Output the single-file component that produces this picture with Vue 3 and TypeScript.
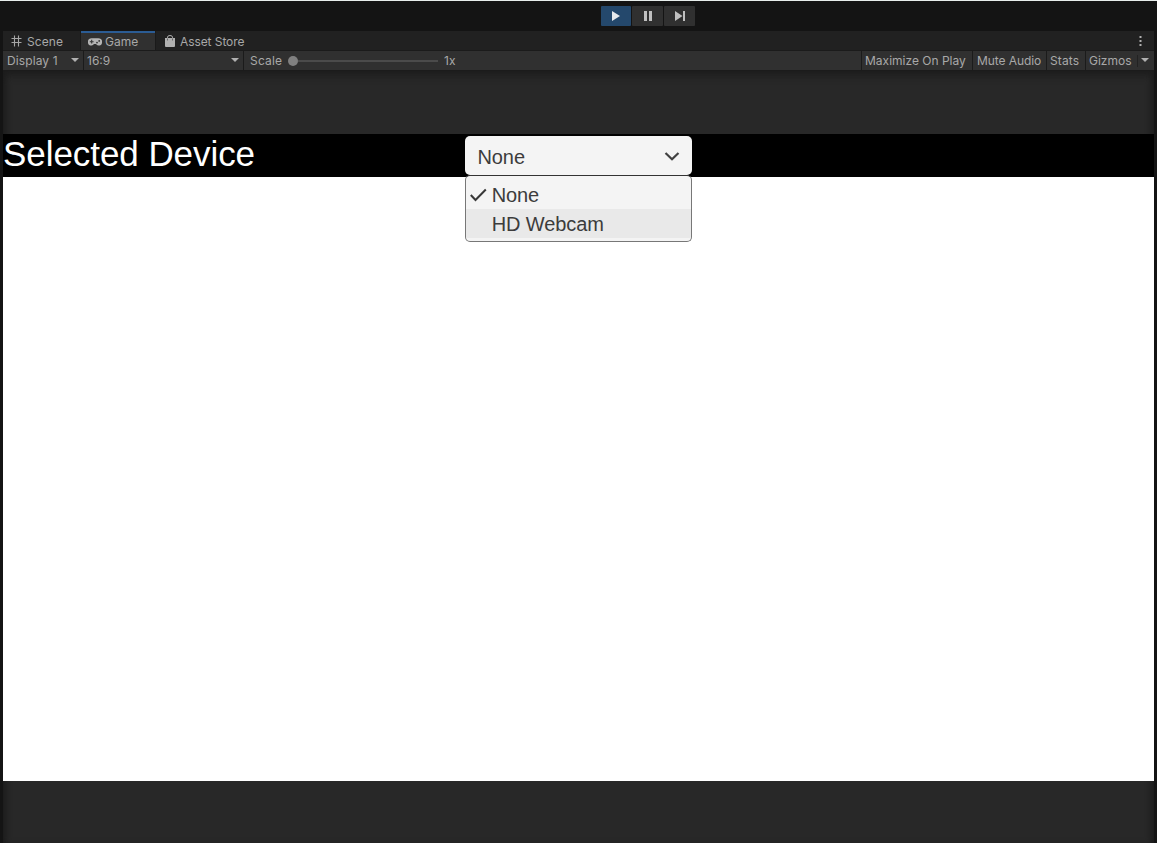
<script setup lang="ts">
import { ref } from 'vue'

const selected = ref('None')
const hovered = ref('HD Webcam')
const devices: string[] = ['None', 'HD Webcam']
</script>

<template>
  <div class="editor">
    <header class="playbar">
      <button class="play active" aria-label="Play">
        <svg width="30" height="20"><path d="M11 5 L19 10 L11 15 Z" fill="#e6e9ec" /></svg>
      </button>
      <button class="play" aria-label="Pause">
        <svg width="31" height="20"><path d="M12 5h3v10h-3zM17 5h3v10h-3z" fill="#c0c0c0" /></svg>
      </button>
      <button class="play" aria-label="Step">
        <svg width="31" height="20"><path d="M11 5 L18.5 10 L11 15 Z M19 5h2v10h-2z" fill="#c0c0c0" /></svg>
      </button>
    </header>

    <section class="panel">
      <nav class="tabs">
        <div class="tab scene">
          <svg width="12" height="12" viewBox="0 0 12 12">
            <path d="M3.5 0.5v11M7.5 0.5v11M0.5 3.5h10M0.5 7.5h10" stroke="#a5a5a5" stroke-width="1.1" />
          </svg>
          <span>Scene</span>
        </div>
        <div class="tab game">
          <svg width="14" height="8" viewBox="0 0 14 8">
            <path d="M3.6 0.2h6.8a3.6 3.6 0 0 1 0 7.4c-1.2 0-1.8-.8-2.3-1.5H5.9c-.5.7-1.1 1.5-2.3 1.5a3.6 3.6 0 0 1 0-7.4z" fill="#b5b5b5" />
            <path d="M1.8 3.7h3.8M3.7 1.8v3.8" stroke="#353535" stroke-width="1.1" />
            <circle cx="9" cy="4.6" r=".9" fill="#353535" /><circle cx="11.2" cy="2.9" r=".9" fill="#353535" />
          </svg>
          <span>Game</span>
        </div>
        <div class="tab store">
          <svg width="10" height="12" viewBox="0 0 10 12">
            <path d="M0 3h10v8q0 1-1 1H1q-1 0-1-1z" fill="#b0b0b0" />
            <path d="M2.5 4V2.2Q2.5.5 5 .5t2.5 1.7V4" fill="none" stroke="#b0b0b0" />
            <path d="M2.5 3.5v2M7.5 3.5v2" stroke="#666" />
          </svg>
          <span>Asset Store</span>
        </div>
        <svg class="more" width="3" height="11"><path d="M.5 0h2v2h-2zM.5 4h2v2h-2zM.5 8h2v2h-2z" fill="#b0b0b0" /></svg>
      </nav>

      <div class="toolbar">
        <div class="cell display"><span>Display 1</span><i class="arrow" /></div>
        <div class="cell ratio"><span>16:9</span><i class="arrow" /></div>
        <div class="scale">
          <span class="scale-label">Scale</span>
          <div class="slider"><i class="knob" /><i class="track" /></div>
          <span>1x</span>
        </div>
        <div class="cell opt maximize"><span>Maximize On Play</span></div>
        <div class="cell opt mute"><span>Mute Audio</span></div>
        <div class="cell opt stats"><span>Stats</span></div>
        <div class="cell opt gizmos"><span>Gizmos</span><i class="split" /><i class="arrow" /></div>
      </div>

      <main class="viewport">
        <div class="canvas">
          <div class="device-row">
            <h1>Selected Device</h1>
            <div class="dropdown">
              <div class="field">
                <span>{{ selected }}</span>
                <svg width="16" height="10" viewBox="0 0 16 10">
                  <path d="M1.5 1 L8 7.3 L14.5 1" fill="none" stroke="#414141" stroke-width="2.2" />
                </svg>
              </div>
              <div class="menu">
                <div v-for="d in devices" :key="d" class="item" :class="{ hover: d === hovered }">
                  <svg v-if="d === selected" width="18" height="14" viewBox="0 0 18 14">
                    <path d="M0.8 7 L5.5 12 L15.8 1.5" fill="none" stroke="#383838" stroke-width="2" />
                  </svg>
                  <span>{{ d }}</span>
                </div>
              </div>
            </div>
          </div>
        </div>
      </main>
    </section>
  </div>
</template>

<style>
body {
  margin: 0;
  background: #141414;
}
</style>

<style scoped>
.editor {
  box-sizing: border-box;
  width: 1157px;
  height: 843px;
  overflow: hidden;
  background: #141414;
  border-top: 1px solid #e8eeec;
  font: 12px/18px Inter, "Liberation Sans", sans-serif;
  color: #a8a8a8;
  display: flex;
  flex-direction: column;
}
.playbar {
  height: 30px;
  box-sizing: border-box;
  padding: 5px 0 0 601px;
  display: flex;
  gap: 1px;
  flex: none;
}
.play {
  display: block;
  height: 20px;
  padding: 0;
  border: 0;
  background: #303030;
  border-radius: 1px;
}
.play.active { background: #24486c; }
.play svg { display: block; }
.panel {
  flex: 1;
  margin: 0 3px;
  display: flex;
  flex-direction: column;
  width: 1151px;
}
.tabs {
  height: 19px;
  background: #212121;
  display: flex;
  flex: none;
}
.tab {
  box-sizing: border-box;
  height: 19px;
  display: flex;
  align-items: center;
  white-space: nowrap;
}
.tab span { line-height: 17px; padding-top: 2px; }
.scene { width: 78px; padding-left: 8px; gap: 4px; border-right: 1px solid #1a1a1a; letter-spacing: 0.1px; }
.scene svg { margin-top: 1px; }
.game { width: 74px; padding-left: 7px; gap: 3px; background: #303030; border-top: 2px solid #2b5c94; }
.game span { padding-top: 0; }
.store { padding-left: 9px; gap: 5px; border-left: 1px solid #1a1a1a; letter-spacing: -0.08px; }
.more { margin: 5px 12px 0 auto; }
.toolbar {
  height: 21px;
  box-sizing: border-box;
  background: #303030;
  border-top: 1px solid #1b1b1b;
  border-bottom: 1px solid #1b1b1b;
  display: flex;
  flex: none;
  white-space: nowrap;
}
.toolbar span { line-height: 19px; }
.cell {
  box-sizing: border-box;
  height: 19px;
  display: flex;
  align-items: center;
  justify-content: space-between;
  border-right: 1px solid #1b1b1b;
  padding: 0 4px;
}
.display { width: 81px; letter-spacing: 0.1px; }
.ratio { width: 160px; padding-left: 3px; }
.arrow {
  width: 0;
  height: 0;
  border: 4px solid transparent;
  border-top-color: #b0b0b0;
  border-bottom: 0;
  margin-bottom: 1px;
}
.scale { display: flex; align-items: center; padding-left: 6px; flex: 1; }
.scale-label { width: 38px; letter-spacing: 0.2px; }
.slider { width: 150px; margin-right: 6px; display: flex; align-items: center; margin-top: 1px; }
.knob { width: 10px; height: 10px; border-radius: 50%; background: #808080; }
.track { height: 2px; flex: 1; background: #4b4b4b; }
.opt { border-right: 0; border-left: 1px solid #1b1b1b; padding: 0 0 0 3px; }
.maximize { width: 111px; }
.mute { width: 74px; padding-left: 4px; letter-spacing: -0.08px; }
.stats { width: 39px; letter-spacing: 0.1px; }
.gizmos { width: 69px; padding-right: 5px; }
.split { width: 1px; height: 12px; background: #222; margin-left: 3px; }
.viewport {
  flex: 1;
  background: #282828;
  box-shadow: inset 0 4px 8px #1c1c1c, inset 5px 0 5px -3px #1d1d1d, inset -5px 0 5px -3px #1d1d1d;
  padding-top: 63px;
}
.canvas { height: 647px; background: #fff; }
.device-row {
  height: 43px;
  background: #000;
  display: flex;
  font-family: "Liberation Sans", Arial, sans-serif;
}
h1 {
  width: 462px;
  margin: 0;
  font-size: 35px;
  line-height: 40px;
  font-weight: 400;
  letter-spacing: -0.06px;
  color: #fff;
  white-space: nowrap;
}
.dropdown { width: 227px; padding-top: 2px; color: #3c3c3c; font-size: 20px; letter-spacing: -0.1px; }
.field {
  box-sizing: border-box;
  height: 39px;
  padding: 2px 12px 0 12.5px;
  border-radius: 5px;
  background: #f4f4f4;
  display: flex;
  align-items: center;
  justify-content: space-between;
}
.menu {
  box-sizing: border-box;
  height: 67px;
  border: 1px solid #777;
  border-top-color: #333;
  border-radius: 5px;
  background: #f4f4f4;
  padding-top: 4px;
}
.item { height: 29px; display: flex; align-items: center; padding-left: 25.7px; }
.item svg { margin-left: -22px; margin-right: 4px; }
.item.hover { background: #e9e9e9; }
</style>
